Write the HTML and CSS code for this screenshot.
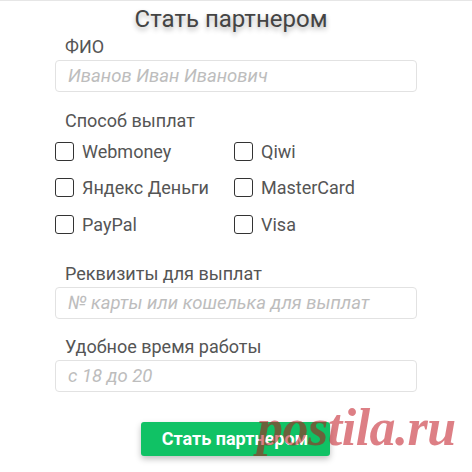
FILE: index.html
```html
<!DOCTYPE html>
<html lang="ru">
  <head>
    <meta charset="UTF-8" />
    <meta name="viewport" content="width=device-width, initial-scale=1.0" />
    <title>Стать партнером</title>
    <link rel="stylesheet" href="styles.css">
  </head>

  <body>
    <div class="page">
      <h1 class="title">Стать партнером</h1>

      <form class="partner">
        <label class="label" for="fio">ФИО</label>
        <input class="field" id="fio" type="text" placeholder="Иванов Иван Иванович" />

        <div class="label label-group">Способ выплат</div>
        <div class="methods">
          <label class="method"><input type="checkbox" /><span class="box"></span>Webmoney</label>
          <label class="method"><input type="checkbox" /><span class="box"></span>Qiwi</label>
          <label class="method"><input type="checkbox" /><span class="box"></span>Яндекс Деньги</label>
          <label class="method"><input type="checkbox" /><span class="box"></span>MasterCard</label>
          <label class="method"><input type="checkbox" /><span class="box"></span>PayPal</label>
          <label class="method"><input type="checkbox" /><span class="box"></span>Visa</label>
        </div>

        <label class="label label-req" for="req">Реквизиты для выплат</label>
        <input class="field" id="req" type="text" placeholder="№ карты или кошелька для выплат" />

        <label class="label label-time" for="time">Удобное время работы</label>
        <input class="field" id="time" type="text" placeholder="с 18 до 20" />

        <button class="submit" type="button">Стать партнером</button>
      </form>

      <div class="mark">postila.ru</div>
    </div>
  </body>
</html>
```

FILE: styles.css
```css
* {
  margin: 0;
  padding: 0;
  box-sizing: border-box;
}

body {
  background: #fff;
  font-family: Roboto, "Liberation Sans", sans-serif;
  color: #555;
}

.page {
  position: relative;
  width: 472px;
  height: 472px;
  border-top: 1px solid #e6e6e6;
  overflow: hidden;
}

.title {
  margin: 3px 0 0 -10px;
  text-align: center;
  font-size: 24px;
  font-weight: 400;
  line-height: 30px;
  color: #444;
  text-shadow: 0 3px 5px rgba(0, 0, 0, 0.3);
}

.partner {
  display: flex;
  flex-direction: column;
  width: 362px;
  margin: 2px 0 0 55px;
}

.label {
  display: block;
  padding-left: 10px;
  font-size: 18px;
  line-height: 21px;
  color: #555;
  margin-bottom: 3px;
}

.label-group {
  margin-top: 18px;
  margin-bottom: 2px;
}

.label-req {
  margin-top: 20px;
  margin-bottom: 3px;
}

.label-time {
  margin-top: 17px;
  margin-bottom: 3px;
}

.field {
  display: block;
  width: 100%;
  height: 32px;
  padding: 0 11px 0 12px;
  border: 1px solid #e2e2e2;
  border-radius: 4px;
  font-family: inherit;
  font-size: 18.5px;
  color: #555;
  outline: none;
}

.field::placeholder {
  color: #bdbdbd;
  font-style: italic;
}

.methods {
  display: grid;
  grid-template-columns: 179px 1fr;
  grid-auto-rows: 36.5px;
}

.method {
  display: flex;
  align-items: center;
  font-size: 18px;
  color: #555;
  cursor: pointer;
}

.method input {
  display: none;
}

.method .box {
  width: 19px;
  height: 19px;
  margin-right: 8px;
  border: 1.6px solid #333;
  border-radius: 3px;
}

.submit {
  align-self: center;
  width: 189px;
  height: 34px;
  margin: 30px 0 0 -2px;
  border: 0;
  border-radius: 3px;
  background-color: #10c265;
  box-shadow: 0 3px 6px rgba(0, 0, 0, 0.25);
  font-family: inherit;
  font-size: 18px;
  font-weight: 700;
  color: #fff;
  cursor: pointer;
}

.mark {
  position: absolute;
  left: 257px;
  top: 401px;
  font-family: "Liberation Serif", serif;
  font-size: 52px;
  font-weight: 700;
  font-style: italic;
  letter-spacing: -0.5px;
  line-height: 1;
  color: rgba(190, 10, 22, 0.52);
  pointer-events: none;
}
```
